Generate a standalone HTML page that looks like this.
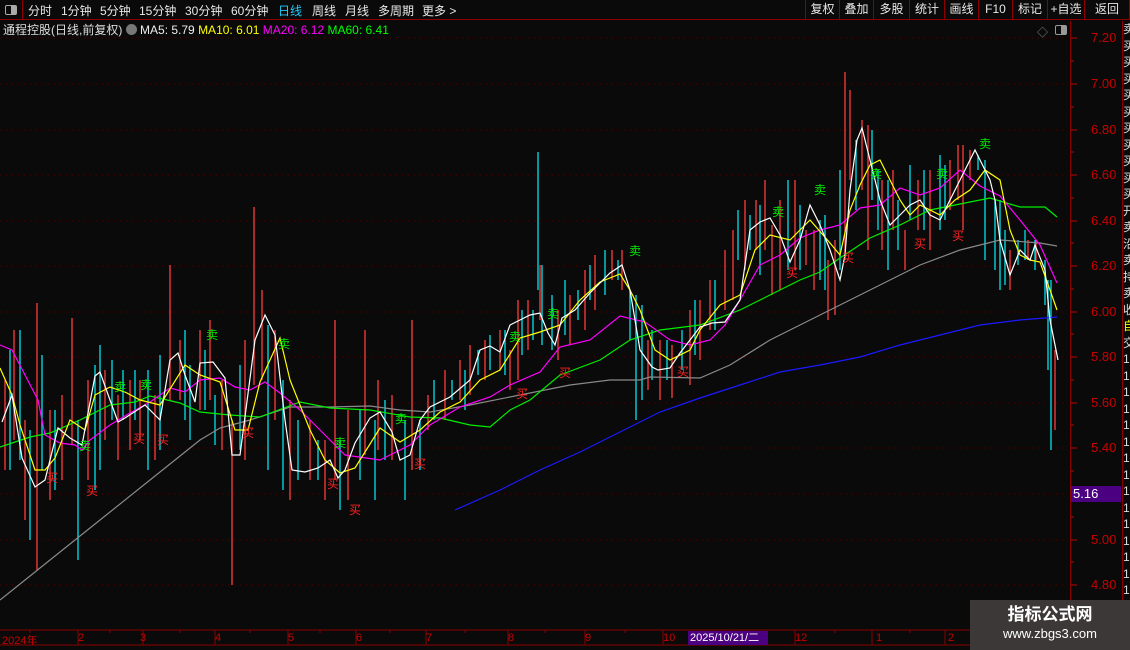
<!DOCTYPE html>
<html><head><meta charset="utf-8"><style>
*{margin:0;padding:0;box-sizing:border-box}
body{width:1130px;height:650px;background:#0a0a0a;overflow:hidden;position:relative;font-family:"Liberation Sans","Noto Sans CJK SC",sans-serif;color:#ddd}
.top{position:absolute;left:0;top:0;width:1130px;height:20px;border-bottom:1px solid #8b0000;font-size:12px}
.top span{position:absolute;top:2px;color:#e8e8e8}
.btn{position:absolute;top:0;height:20px;border-left:1px solid #8b0000;color:#e8e8e8;font-size:12px;line-height:19px;text-align:center}
.info{position:absolute;left:3px;top:21px;font-size:12px;white-space:nowrap}
.ax{position:absolute;left:1070px;top:21px;width:1px;height:609px;background:#8b0000}
.pl{position:absolute;left:1091px;font-size:13px;color:#c80000}
.strip{position:absolute;left:1122px;top:21px;width:8px;height:609px;border-left:1px solid #8b0000;overflow:hidden;font-size:12px;color:#ddd;line-height:16.5px;white-space:nowrap}
.dl{position:absolute;top:632px;font-size:11px;color:#c80000}
.s{position:absolute;font-size:12px;color:#00ee00}
.b{position:absolute;font-size:12px;color:#f22}
</style></head><body>
<div class="top">
<div style="position:absolute;left:0;top:0;width:23px;height:20px;border-right:1px solid #8b0000"><div style="position:absolute;left:5px;top:5px;width:12px;height:10px;border:1px solid #aaa;border-radius:2px"><div style="position:absolute;right:0;top:0;width:5px;height:8px;background:#aaa"></div></div></div>
<span style="left:28px">分时</span><span style="left:61px">1分钟</span><span style="left:100px">5分钟</span><span style="left:139px">15分钟</span><span style="left:185px">30分钟</span><span style="left:231px">60分钟</span><span style="left:278px;color:#2cf">日线</span><span style="left:312px">周线</span><span style="left:345px">月线</span><span style="left:378px">多周期</span><span style="left:422px">更多 &gt;</span>
<div class="btn" style="left:805px;width:34px">复权</div><div class="btn" style="left:839px;width:34px">叠加</div><div class="btn" style="left:873px;width:36px">多股</div><div class="btn" style="left:909px;width:35px">统计</div><div class="btn" style="left:944px;width:34px">画线</div><div class="btn" style="left:978px;width:34px">F10</div><div class="btn" style="left:1012px;width:35px">标记</div><div class="btn" style="left:1047px;width:37px">+自选</div><div class="btn" style="left:1084px;width:46px;border-right:1px solid #8b0000">返回</div>
</div>
<div class="info">通程控股(日线,前复权) <span style="display:inline-block;width:11px;height:11px;border-radius:50%;background:#777;vertical-align:-1px"></span> <span style="color:#eee">MA5: 5.79</span> <span style="color:#ff0">MA10: 6.01</span> <span style="color:#f0f">MA20: 6.12</span> <span style="color:#0f0">MA60: 6.41</span></div>
<div style="position:absolute;left:1037px;top:24px;color:#888;font-size:11px">◇</div>
<div style="position:absolute;left:1055px;top:25px;width:12px;height:10px;border:1px solid #999;border-radius:2px"><div style="position:absolute;right:0;top:0;width:5px;height:8px;background:#999"></div></div>
<svg style="position:absolute;left:0;top:0" width="1130" height="650">
<g stroke="#5a0000" stroke-dasharray="1,5">
<path d="M0 38H1068M0 84H1068M0 130H1068M0 175H1068M0 221H1068M0 266H1068M0 312H1068M0 357H1068M0 403H1068M0 448H1068M0 494H1068M0 540H1068M0 585H1068"/>
</g>
<g stroke="#c00000">
<path d="M1071 38h6M1071 84h6M1071 130h6M1071 175h6M1071 221h6M1071 266h6M1071 312h6M1071 357h6M1071 403h6M1071 448h6M1071 494h6M1071 540h6M1071 585h6M1071 61h3M1071 107h3M1071 152h3M1071 198h3M1071 243h3M1071 289h3M1071 334h3M1071 380h3M1071 425h3M1071 471h3M1071 517h3M1071 562h3"/>
</g>
<path stroke="#ff3c3c" stroke-width="1.3" fill="none" d="M5 380V470M14 330V440M25 420V520M37 303V570M50 410V500M62 395V480M72 318V445M88 380V480M105 370V440M118 395V460M130 380V450M140 380V440M155 395V460M170 265V400M180 340V400M200 330V410M210 320V400M222 380V450M232 420V585M245 340V460M254 207V385M262 290V380M275 330V420M290 400V500M310 420V480M325 440V500M335 320V480M348 410V500M365 330V455M378 380V450M392 395V460M412 320V470M428 395V430M445 370V420M460 360V400M470 345V395M485 340V380M500 330V370M510 350V390M518 300V380M528 300V350M540 265V320M558 310V360M570 295V345M585 270V330M595 255V310M612 250V280M622 250V290M648 340V390M660 340V400M672 345V398M690 310V385M700 300V360M710 280V330M725 250V310M733 230V300M745 200V270M756 200V250M765 180V250M772 225V295M780 200V290M795 180V270M806 230V265M814 230V290M828 260V320M835 240V315M845 72V260M850 90V180M862 120V190M868 125V250M882 180V250M893 170V230M905 230V270M918 180V230M930 170V250M950 160V210M958 145V200M963 145V230M970 150V180M1010 250V290M1028 240V260M1036 240V260M1055 350V430"/>
<path stroke="#00e5ee" stroke-width="1.3" fill="none" d="M10 350V470M20 330V460M30 430V540M42 355V470M55 410V490M78 420V560M95 365V490M100 345V470M112 360V420M123 370V420M135 370V420M148 370V470M160 355V450M185 330V420M190 365V440M205 350V410M215 395V445M240 365V450M268 325V470M283 380V490M298 420V480M318 440V480M340 440V510M360 410V480M375 420V500M385 400V460M405 420V500M420 420V470M434 380V420M452 380V400M465 370V410M478 350V375M490 335V370M505 330V375M522 310V355M533 310V340M538 152V290M542 265V345M552 295V350M565 280V335M578 290V320M590 265V300M605 250V295M618 260V280M630 290V340M636 295V420M642 305V400M652 330V380M667 340V380M682 330V370M695 300V355M715 280V330M738 210V260M750 215V250M760 205V275M788 180V270M800 205V270M820 220V280M825 215V290M840 170V270M856 140V210M872 130V200M878 170V230M888 180V270M898 200V250M910 165V220M924 170V230M940 155V230M945 165V220M978 155V170M985 160V260M995 200V270M1000 200V290M1005 230V285M1018 240V265M1025 230V260M1035 240V270M1045 260V305M1048 280V370M1051 280V450"/>
<g fill="none" stroke-width="1.2">
<polyline stroke="#1a1aff" points="455,510 500,490 540,470 580,452 620,432 660,412 700,398 740,385 780,372 820,365 860,357 900,345 940,335 980,325 1020,320 1057,317"/>
<polyline stroke="#8a8a8a" points="0,600 50,560 100,520 150,480 200,440 220,428 250,420 290,407 330,407 370,406 400,410 430,412 470,405 520,395 570,385 610,380 640,380 650,377 700,378 730,365 770,340 800,325 840,305 880,285 920,265 960,250 1000,240 1040,243 1057,246"/>
<polyline stroke="#00ee00" points="0,447 30,437 50,433 80,420 110,405 135,402 150,396 180,403 200,412 230,415 260,417 300,402 330,408 370,410 410,417 440,418 470,425 490,427 510,410 530,400 560,375 600,360 630,340 660,330 700,325 740,310 770,295 800,280 820,272 840,258 870,238 900,225 930,210 960,204 990,198 1020,207 1045,207 1057,217"/>
<polyline stroke="#ff00ff" points="0,345 12,350 25,375 38,400 45,435 60,443 75,445 82,450 90,440 110,425 130,413 150,402 170,388 185,392 200,380 220,378 235,387 250,390 265,382 280,393 300,410 320,430 345,455 380,460 410,445 430,425 460,407 490,397 510,385 540,372 560,347 590,340 620,316 645,322 670,340 690,345 710,340 725,325 740,300 760,265 780,255 800,238 820,230 840,225 860,208 880,205 900,188 920,195 940,188 960,170 980,186 1000,196 1020,220 1040,245 1057,283"/>
<polyline stroke="#ffff00" points="0,368 12,395 20,425 35,470 45,470 55,458 70,420 85,430 95,395 110,387 125,392 140,400 160,405 185,365 200,375 220,382 235,430 248,430 260,382 270,360 280,338 290,380 310,430 325,460 340,473 355,468 380,428 400,442 420,430 440,412 460,402 480,380 500,370 520,338 540,332 560,325 580,300 600,282 620,274 630,290 640,310 655,350 670,360 690,350 700,330 720,305 740,295 755,250 770,235 790,240 810,220 830,243 840,255 850,210 860,185 870,165 880,160 890,180 900,200 910,215 920,205 940,215 955,200 970,190 985,170 1000,180 1010,230 1020,255 1030,260 1040,262 1050,290 1057,310"/>
<polyline stroke="#ffffff" points="2,422 12,395 22,458 35,487 45,480 58,428 70,438 82,445 95,376 100,372 110,400 118,422 125,418 145,405 160,420 170,360 178,353 185,375 195,402 200,363 213,362 225,378 232,455 240,455 255,340 265,315 275,335 285,420 292,470 305,472 318,468 330,460 338,478 345,470 355,443 370,418 380,412 392,432 400,460 410,455 420,420 430,407 450,397 470,380 480,350 490,346 500,352 510,325 530,315 540,313 548,333 555,345 562,318 575,310 590,293 610,273 622,265 630,290 640,350 652,367 658,370 670,368 680,353 700,327 712,323 725,322 740,300 750,230 760,222 770,218 780,235 790,262 800,240 810,205 820,225 830,250 840,280 845,255 850,190 857,140 862,128 870,160 880,200 890,225 900,215 910,205 920,200 930,215 940,220 950,200 965,170 975,150 980,160 990,180 995,200 1000,240 1010,275 1020,250 1030,260 1035,245 1045,270 1050,320 1058,360"/>
</g>
<path stroke="#8b0000" d="M0 630H1121M0 645H1121"/>
<g stroke="#8b0000"><path d="M78 630v15M143 630v15M215 630v15M288 630v15M356 630v15M426 630v15M508 630v15M585 630v15M663 630v15M795 630v15M872 630v15M945 630v15M30 630v3M110 630v3M180 630v3M250 630v3M320 630v3M390 630v3M465 630v3M545 630v3M625 630v3M730 630v3M835 630v3M910 630v3"/></g>
</svg>
<div class="ax"></div>
<div class="pl" style="top:30px">7.20</div><div class="pl" style="top:76px">7.00</div><div class="pl" style="top:122px">6.80</div><div class="pl" style="top:167px">6.60</div><div class="pl" style="top:213px">6.40</div><div class="pl" style="top:258px">6.20</div><div class="pl" style="top:304px">6.00</div><div class="pl" style="top:349px">5.80</div><div class="pl" style="top:395px">5.60</div><div class="pl" style="top:440px">5.40</div><div class="pl" style="top:532px">5.00</div><div class="pl" style="top:577px">4.80</div>
<div style="position:absolute;left:1071px;top:486px;width:50px;height:16px;background:#4a0080;color:#fff;font-size:13px;line-height:16px;padding-left:2px">5.16</div>
<div class="strip">卖<br>买<br>买<br>买<br>买<br>买<br>买<br>买<br>买<br>买<br>买<br>开<br>卖<br>沿<br>卖<br>持<br>卖<br>收<br><span style="color:#ff0">自</span><br>交<br>1<br>1<br>1<br>1<br>1<br>1<br>1<br>1<br>1<br>1<br>1<br>1<br>1<br>1<br>1</div>
<div class="s" style="left:206px;top:326px">卖</div><div class="s" style="left:278px;top:335px">卖</div><div class="s" style="left:114px;top:378px">卖</div><div class="s" style="left:140px;top:376px">卖</div><div class="s" style="left:79px;top:437px">卖</div><div class="s" style="left:334px;top:434px">卖</div><div class="s" style="left:395px;top:410px">卖</div><div class="s" style="left:509px;top:328px">卖</div><div class="s" style="left:547px;top:305px">卖</div><div class="s" style="left:629px;top:242px">卖</div><div class="s" style="left:772px;top:203px">卖</div><div class="s" style="left:814px;top:181px">卖</div><div class="s" style="left:870px;top:165px">卖</div><div class="s" style="left:936px;top:165px">卖</div><div class="s" style="left:979px;top:135px">卖</div>
<div class="b" style="left:46px;top:469px">买</div><div class="b" style="left:86px;top:482px">买</div><div class="b" style="left:133px;top:430px">买</div><div class="b" style="left:157px;top:431px">买</div><div class="b" style="left:242px;top:424px">买</div><div class="b" style="left:349px;top:501px">买</div><div class="b" style="left:327px;top:475px">买</div><div class="b" style="left:414px;top:455px">买</div><div class="b" style="left:516px;top:385px">买</div><div class="b" style="left:559px;top:364px">买</div><div class="b" style="left:677px;top:363px">买</div><div class="b" style="left:786px;top:264px">买</div><div class="b" style="left:842px;top:249px">买</div><div class="b" style="left:914px;top:235px">买</div><div class="b" style="left:952px;top:227px">买</div>
<div class="dl" style="left:2px">2024年</div><div class="dl" style="left:78px">2</div><div class="dl" style="left:140px">3</div><div class="dl" style="left:215px">4</div><div class="dl" style="left:288px">5</div><div class="dl" style="left:356px">6</div><div class="dl" style="left:426px">7</div><div class="dl" style="left:508px">8</div><div class="dl" style="left:585px">9</div><div class="dl" style="left:663px">10</div>
<div style="position:absolute;left:688px;top:631px;width:80px;height:14px;background:#4a0080;color:#fff;font-size:11px;line-height:14px;padding-left:2px">2025/10/21/二</div>
<div class="dl" style="left:795px">12</div><div class="dl" style="left:876px">1</div><div class="dl" style="left:948px">2</div>
<div style="position:absolute;left:970px;top:600px;width:160px;height:50px;background:#3c3838;color:#fff;text-align:center">
<div style="font-size:17px;font-weight:bold;margin-top:5px;line-height:20px">指标公式网</div>
<div style="font-size:13px;line-height:18px">www.zbgs3.com</div></div>
</body></html>
